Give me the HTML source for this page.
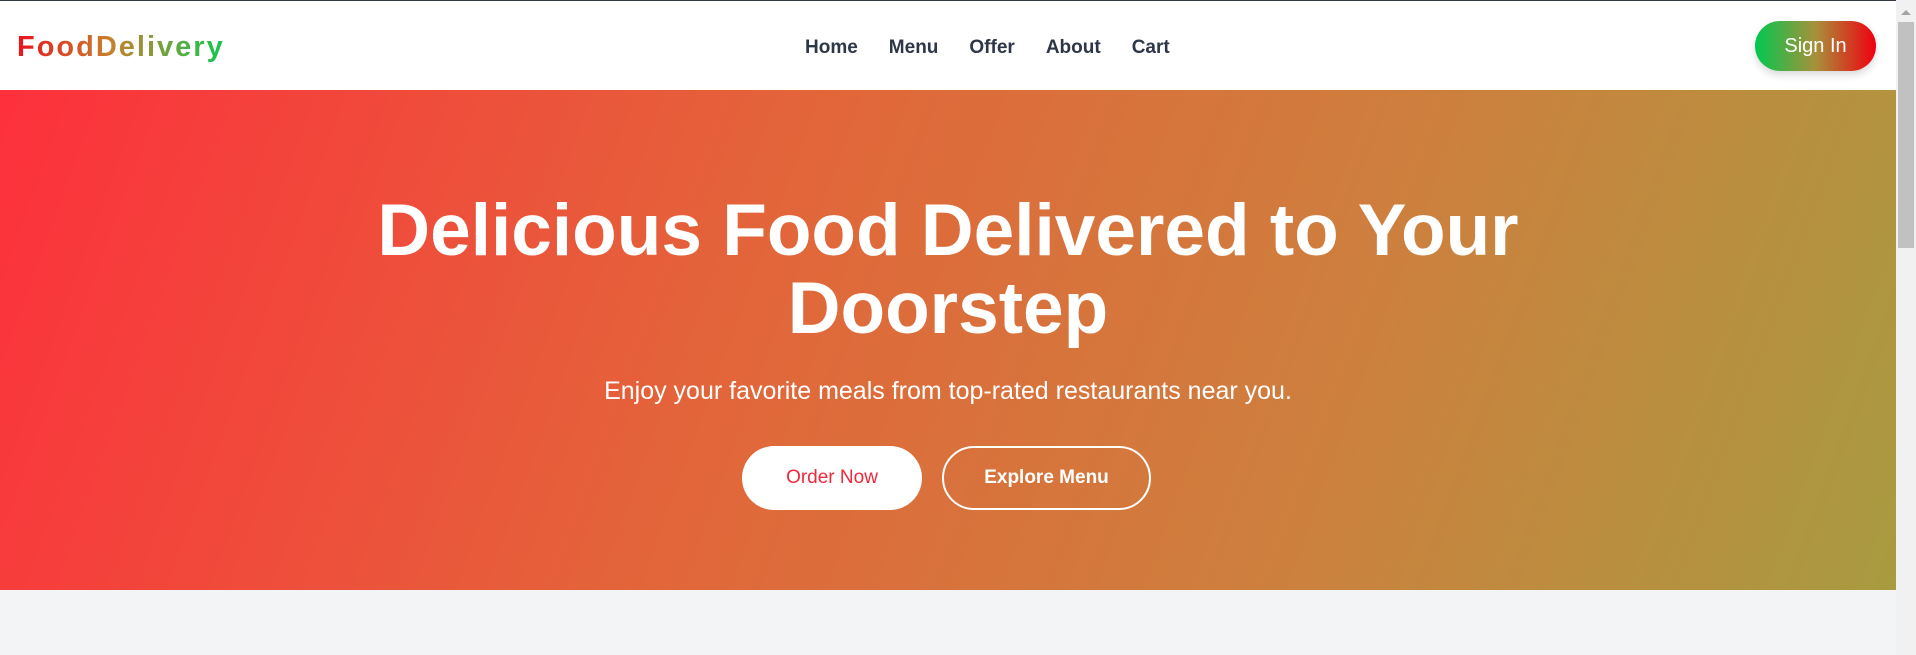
<!DOCTYPE html>
<html><head><style>
*{margin:0;padding:0;box-sizing:border-box}
body{width:1916px;height:655px;overflow:hidden;background:#f3f4f6;font-family:"Liberation Sans",sans-serif;position:relative}
.top{position:absolute;left:0;top:0;width:1896px;height:1px;background:#333845}
header{position:absolute;left:0;top:1px;width:1896px;height:89px;background:#fff}
.logo{position:absolute;left:17px;top:30px;font-size:29px;font-weight:bold;letter-spacing:2px;background:linear-gradient(90deg,#e8141e,#c8802e 45%,#10c850);-webkit-background-clip:text;color:transparent}
nav{position:absolute;left:805px;top:36px;font-size:19px;font-weight:bold;color:#2d3748}
nav span{margin-right:31px}
.sign{position:absolute;left:1755px;top:20px;width:121px;height:50px;border-radius:25px;background:linear-gradient(90deg,#00c850,#a8903a 50%,#f00010);color:#fff;font-size:20px;text-align:center;line-height:50px;box-shadow:0 4px 8px rgba(0,0,0,.15)}
.hero{position:absolute;left:0;top:90px;width:1896px;height:500px;background:linear-gradient(110deg,#fd303c 0%,#e2663a 40%,#cd803e 70%,#a89b40 100%);color:#fff;text-align:center}
h1{position:absolute;left:0;right:0;top:102px;font-size:73px;line-height:78px;font-weight:bold}
.sub{position:absolute;left:0;right:0;top:287px;font-size:25px}
.btn{position:absolute;top:356px;height:64px;border-radius:32px;font-size:19px;line-height:64px;text-align:center}
.b1{left:742px;width:180px;background:#fff;color:#f0283c}
.b2{left:942px;width:209px;border:2px solid #fff;line-height:60px;font-weight:bold}
.sb{position:absolute;left:1896px;top:0;width:20px;height:655px;background:#f1f1f1}
.sb div{position:absolute;left:2px;top:22px;width:16px;height:226px;background:#c1c1c1}
.sb i{position:absolute;left:5px;top:10px;border:5px solid transparent;border-bottom:5px solid #a3a3a3;border-top:0}
</style></head><body>
<div class="top"></div>
<header><div class="logo">FoodDelivery</div>
<nav><span>Home</span><span>Menu</span><span>Offer</span><span>About</span><span>Cart</span></nav>
<div class="sign">Sign In</div></header>
<div class="hero">
<h1>Delicious Food Delivered to Your<br>Doorstep</h1>
<div class="sub">Enjoy your favorite meals from top-rated restaurants near you.</div>
<div class="btn b1">Order Now</div>
<div class="btn b2">Explore Menu</div>
</div>
<div class="sb"><i></i><div></div></div>
</body></html>
